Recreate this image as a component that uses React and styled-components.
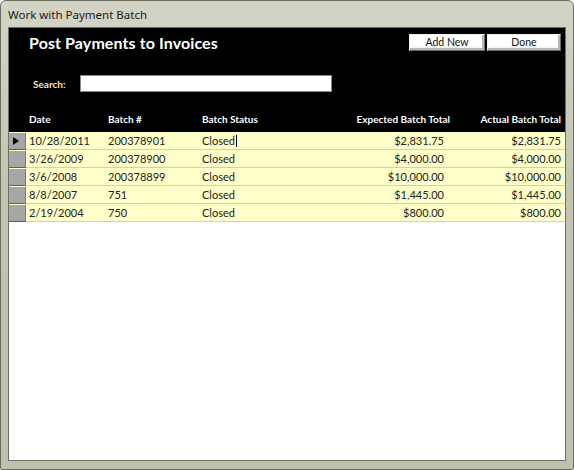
import React from 'react'
import styled, { createGlobalStyle } from 'styled-components'

const GlobalStyle = createGlobalStyle`
  html, body {
    margin: 0;
    padding: 0;
    background: #fff;
  }
  * { box-sizing: border-box; }
`

const Window = styled.div`
  width: 574px;
  height: 470px;
  display: flex;
  flex-direction: column;
  padding: 0 7px 8px 7px;
  background: linear-gradient(180deg, #d3d4c6 0%, #c3c4b2 40%, #bfc0ad 100%);
  border: 1px solid #6d6e62;
  border-radius: 6px 6px 2px 2px;
  font-family: Lato, "Liberation Sans", sans-serif;
`

const TitleBar = styled.div`
  height: 26px;
  display: flex;
  align-items: center;
  padding-left: 0;
  font-family: "Noto Sans", "Liberation Sans", sans-serif;
  font-size: 11.5px;
  color: #1a1a1a;
`

const Client = styled.div`
  flex: 1;
  display: flex;
  flex-direction: column;
  background: #fff;
  border: 1px solid #6f7064;
  overflow: hidden;
`

const Header = styled.div`
  background: #000;
  height: 104px;
  display: flex;
  flex-direction: column;
`

const TopRow = styled.div`
  display: flex;
  align-items: center;
  justify-content: space-between;
  height: 28px;
  padding: 0 4px 0 20px;
`

const FormTitle = styled.h1`
  margin: 0;
  color: #fff;
  font-size: 16px;
  font-weight: 700;
  letter-spacing: 0.1px;
`

const Buttons = styled.div`
  display: flex;
  gap: 2px;
`

const Button = styled.button`
  width: ${p => p.$w}px;
  height: 17px;
  padding: 0;
  font-family: Lato, "Liberation Sans", sans-serif;
  font-size: 10.5px;
  color: #111;
  background: linear-gradient(180deg, #ffffff 0%, #ffffff 70%, #e6e6e6 100%);
  border: 1px solid #8a8a8a;
  border-color: #f0f0f0 #6a6a6a #6a6a6a #f0f0f0;
  box-shadow: inset -2px -2px 0 #b8b8b8, inset 2px 2px 0 #ffffff;
`

const SearchRow = styled.div`
  display: flex;
  align-items: center;
  margin-top: 19px;
  padding-left: 24px;
  gap: 14px;
`

const SearchLabel = styled.label`
  color: #f3e7b5;
  font-size: 10px;
  font-weight: 700;
`

const SearchInput = styled.input`
  width: 252px;
  height: 17px;
  border: 1px solid #888;
  background: #fff;
  outline: none;
`

const Grid = styled.div`
  display: grid;
  grid-template-columns: 17px 79px 94px 132px 119px 1fr;
  align-items: center;
`

const HeadRow = styled(Grid)`
  margin-top: auto;
  height: 22px;
  padding-bottom: 5px;
`

const HeadCell = styled.div`
  color: #fff;
  font-size: 10px;
  font-weight: 700;
  text-align: ${p => (p.$right ? 'right' : 'left')};
  padding: ${p => (p.$right ? `0 ${p.$pr || 0}px 0 0` : '0 0 0 3px')};
`

const Row = styled(Grid)`
  height: 18px;
  background: #ffffc9;
  border-bottom: 1px solid #cfcfbf;
`

const Selector = styled.div`
  height: 100%;
  background: #a6a6a6;
  border-right: 1px solid #7a7a7a;
  border-bottom: 1px solid #5e5e5e;
  margin-bottom: -1px;
  display: flex;
  align-items: center;
  justify-content: center;
`

const Arrow = styled.div`
  width: 0;
  height: 0;
  border-top: 4.5px solid transparent;
  border-bottom: 4.5px solid transparent;
  border-left: 6px solid #000;
  margin-left: -2px;
`

const Cell = styled.div`
  font-size: 11px;
  color: #222;
  white-space: nowrap;
  text-align: ${p => (p.$right ? 'right' : 'left')};
  padding: ${p => (p.$right ? `0 ${p.$pr}px 0 0` : '0 0 0 3px')};
`

const Caret = styled.span`
  display: inline-block;
  width: 1px;
  height: 12px;
  background: #000;
  vertical-align: -2px;
  margin-left: 1px;
`

const batches = [
  { date: '10/28/2011', num: '200378901', status: 'Closed', expected: '$2,831.75', actual: '$2,831.75' },
  { date: '3/26/2009', num: '200378900', status: 'Closed', expected: '$4,000.00', actual: '$4,000.00' },
  { date: '3/6/2008', num: '200378899', status: 'Closed', expected: '$10,000.00', actual: '$10,000.00' },
  { date: '8/8/2007', num: '751', status: 'Closed', expected: '$1,445.00', actual: '$1,445.00' },
  { date: '2/19/2004', num: '750', status: 'Closed', expected: '$800.00', actual: '$800.00' },
]

export default function App() {
  return (
    <>
      <GlobalStyle />
      <Window>
        <TitleBar>Work with Payment Batch</TitleBar>
        <Client>
          <Header>
            <TopRow>
              <FormTitle>Post Payments to Invoices</FormTitle>
              <Buttons>
                <Button $w={76}>Add New</Button>
                <Button $w={74}>Done</Button>
              </Buttons>
            </TopRow>
            <SearchRow>
              <SearchLabel>Search:</SearchLabel>
              <SearchInput />
            </SearchRow>
            <HeadRow>
              <span />
              <HeadCell>Date</HeadCell>
              <HeadCell>Batch #</HeadCell>
              <HeadCell>Batch Status</HeadCell>
              <HeadCell $right>Expected Batch Total</HeadCell>
              <HeadCell $right $pr={4}>Actual Batch Total</HeadCell>
            </HeadRow>
          </Header>
          {batches.map((b, i) => (
            <Row key={b.num}>
              <Selector>{i === 0 && <Arrow />}</Selector>
              <Cell>{b.date}</Cell>
              <Cell>{b.num}</Cell>
              <Cell>
                {b.status}
                {i === 0 && <Caret />}
              </Cell>
              <Cell $right $pr={6}>{b.expected}</Cell>
              <Cell $right $pr={4}>{b.actual}</Cell>
            </Row>
          ))}
        </Client>
      </Window>
    </>
  )
}
